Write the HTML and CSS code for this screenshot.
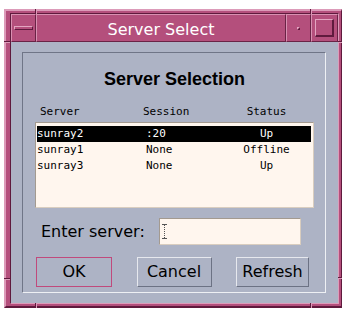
FILE: index.html
```html
<!DOCTYPE html>
<html lang="en">
<head>
    <meta charset="UTF-8">
    <title>Server Select</title>
    <link rel="stylesheet" href="styles.css">
</head>
<body>
    <div class="frame">
        <span class="notch notch-v" style="left:29px;top:-2px"></span>
        <span class="notch notch-v" style="left:304px;top:-2px"></span>
        <span class="notch notch-v" style="left:29px;top:292px"></span>
        <span class="notch notch-v" style="left:304px;top:292px"></span>
        <span class="notch notch-h" style="left:-2px;top:30px;width:6px"></span>
        <span class="notch notch-h" style="left:332px;top:30px;width:4px"></span>
        <span class="notch notch-h" style="left:-2px;top:267px;width:6px"></span>
        <span class="notch notch-h" style="left:332px;top:266px;width:4px"></span>

        <div class="inner">
            <div class="titlebar">
                <div class="tb-cell tb-menu"><span class="menu-bar"></span></div>
                <div class="tb-cell tb-title">Server Select</div>
                <div class="tb-cell tb-min"><span class="min-dot"></span></div>
                <div class="tb-cell tb-max"><span class="max-box"></span></div>
            </div>
            <div class="client">
                <div class="panel">
                    <h1>Server Selection</h1>
                    <div class="cols">
                        <span>Server</span>
                        <span>Session</span>
                        <span class="center">Status</span>
                    </div>
                    <div class="list">
                        <div class="row selected"><span>sunray2</span><span>:20</span><span class="center">Up</span></div>
                        <div class="row"><span>sunray1</span><span>None</span><span class="center">Offline</span></div>
                        <div class="row"><span>sunray3</span><span>None</span><span class="center">Up</span></div>
                    </div>
                    <div class="entry">
                        <label for="server">Enter server:</label>
                        <div class="field" id="server">
                            <svg width="5" height="15" viewBox="0 0 5 15">
                                <path d="M0 0.5h5M0 14.5h5" stroke="#555" stroke-width="1"/>
                                <path d="M2.5 1v13" stroke="#555" stroke-width="1" stroke-dasharray="1 1"/>
                            </svg>
                        </div>
                    </div>
                    <div class="buttons">
                        <button class="btn btn-ok">OK</button>
                        <button class="btn btn-cancel">Cancel</button>
                        <button class="btn btn-refresh">Refresh</button>
                    </div>
                </div>
            </div>
        </div>
    </div>
</body>
</html>
```

FILE: styles.css
```css
body {
    margin: 0;
    padding: 9px 0 0 4px;
    background-color: #fff;
}

.frame {
    position: relative;
    width: 338px;
    height: 299px;
    box-sizing: border-box;
    background-color: #b44f7c;
    border-style: solid;
    border-width: 2px 1px 2px 2px;
    border-color: #dc9bb9 #5f1a3d #5f1a3d #dc9bb9;
    padding: 2px 2px 2px 4px;
}

.notch {
    position: absolute;
    display: block;
}

.notch-v {
    width: 0;
    height: 5px;
    border-left: 1px solid #5f1a3d;
    border-right: 1px solid #dc9bb9;
}

.notch-h {
    height: 0;
    border-top: 1px solid #5f1a3d;
    border-bottom: 1px solid #dc9bb9;
}

.inner {
    border-style: solid;
    border-width: 1px;
    border-color: #5f1a3d #dc9bb9 #dc9bb9 #5f1a3d;
    height: 289px;
    display: flex;
    flex-direction: column;
}

.titlebar {
    display: flex;
    height: 28px;
}

.tb-cell {
    box-sizing: border-box;
    height: 28px;
    background-color: #b44f7c;
    border-style: solid;
    border-width: 1px;
    border-color: #d991b2 #6a2346 #6a2346 #d991b2;
    display: flex;
    align-items: center;
    justify-content: center;
}

.tb-menu {
    width: 25px;
}

.tb-title {
    width: 250px;
    align-items: flex-start;
    padding-top: 5px;
    font-family: "DejaVu Sans", sans-serif;
    font-size: 16px;
    line-height: 19px;
    color: #fff;
}

.tb-min {
    width: 25px;
}

.tb-max {
    width: 27px;
}

.menu-bar {
    width: 19px;
    height: 4px;
    box-sizing: border-box;
    border-style: solid;
    border-width: 1px;
    border-color: #e3a6c1 #5f1a3d #5f1a3d #e3a6c1;
}

.min-dot {
    width: 3px;
    height: 3px;
    box-sizing: border-box;
    border-style: solid;
    border-width: 1px;
    border-color: #e3a6c1 #5f1a3d #5f1a3d #e3a6c1;
}

.max-box {
    width: 19px;
    height: 18px;
    box-sizing: border-box;
    border-style: solid;
    border-width: 1px 2px 2px 1px;
    border-color: #e3a6c1 #5f1a3d #5f1a3d #e3a6c1;
}

.client {
    flex: 1;
    background-color: #adb3c5;
    padding: 10px 12px 10px 11px;
}

.panel {
    height: 241px;
    box-sizing: border-box;
    border-style: solid;
    border-width: 1px;
    border-color: #6f7587 #eef0f4 #eef0f4 #6f7587;
    padding: 0 11px 5px 12px;
    display: flex;
    flex-direction: column;
}

h1 {
    margin: 16px 0 0;
    font-family: "Liberation Sans", Arial, sans-serif;
    font-weight: bold;
    font-size: 18px;
    line-height: 20px;
    text-align: center;
    color: #000;
}

.cols, .row {
    font-family: "DejaVu Sans Mono", monospace;
    font-size: 11px;
    color: #000;
    white-space: pre;
}

.cols {
    margin-top: 16px;
    line-height: 13px;
    display: grid;
    grid-template-columns: 103px 79px 1fr;
    padding: 0 3px 0 5px;
}

.center {
    text-align: center;
}

.list {
    margin-top: 4px;
    height: 86px;
    box-sizing: border-box;
    background-color: #fff6ee;
    border-style: solid;
    border-width: 1px;
    border-color: #a39a90 #d9cdbf #d9cdbf #a39a90;
    padding: 3px 2px 0 1px;
}

.row {
    display: grid;
    grid-template-columns: 109px 76px 1fr;
    height: 16px;
    line-height: 16px;
}

.row.selected {
    background-color: #000;
    color: #fff;
}

.entry {
    margin-top: 10px;
    height: 27px;
    display: flex;
    align-items: center;
    padding-left: 6px;
}

.entry label {
    width: 118px;
    font-family: "DejaVu Sans", sans-serif;
    font-size: 16px;
    line-height: 19px;
    color: #000;
}

.field {
    width: 142px;
    height: 27px;
    box-sizing: border-box;
    background-color: #fff6ee;
    border-style: solid;
    border-width: 1px;
    border-color: #a39a90 #d9cdbf #d9cdbf #a39a90;
    padding: 5px 0 0 2px;
}

.field svg {
    display: block;
}

.buttons {
    margin-top: 12px;
    display: flex;
    justify-content: space-between;
    padding: 0 5px 0 1px;
}

.btn {
    height: 30px;
    box-sizing: border-box;
    padding: 0;
    background-color: #adb3c5;
    border-style: solid;
    border-width: 1px;
    border-color: #e6e8ee #6c7284 #6c7284 #e6e8ee;
    font-family: "DejaVu Sans", sans-serif;
    font-size: 16px;
    line-height: 28px;
    color: #000;
}

.btn-ok {
    width: 76px;
    border-color: #c04a7c;
}

.btn-cancel {
    width: 75px;
}

.btn-refresh {
    width: 73px;
}
```
